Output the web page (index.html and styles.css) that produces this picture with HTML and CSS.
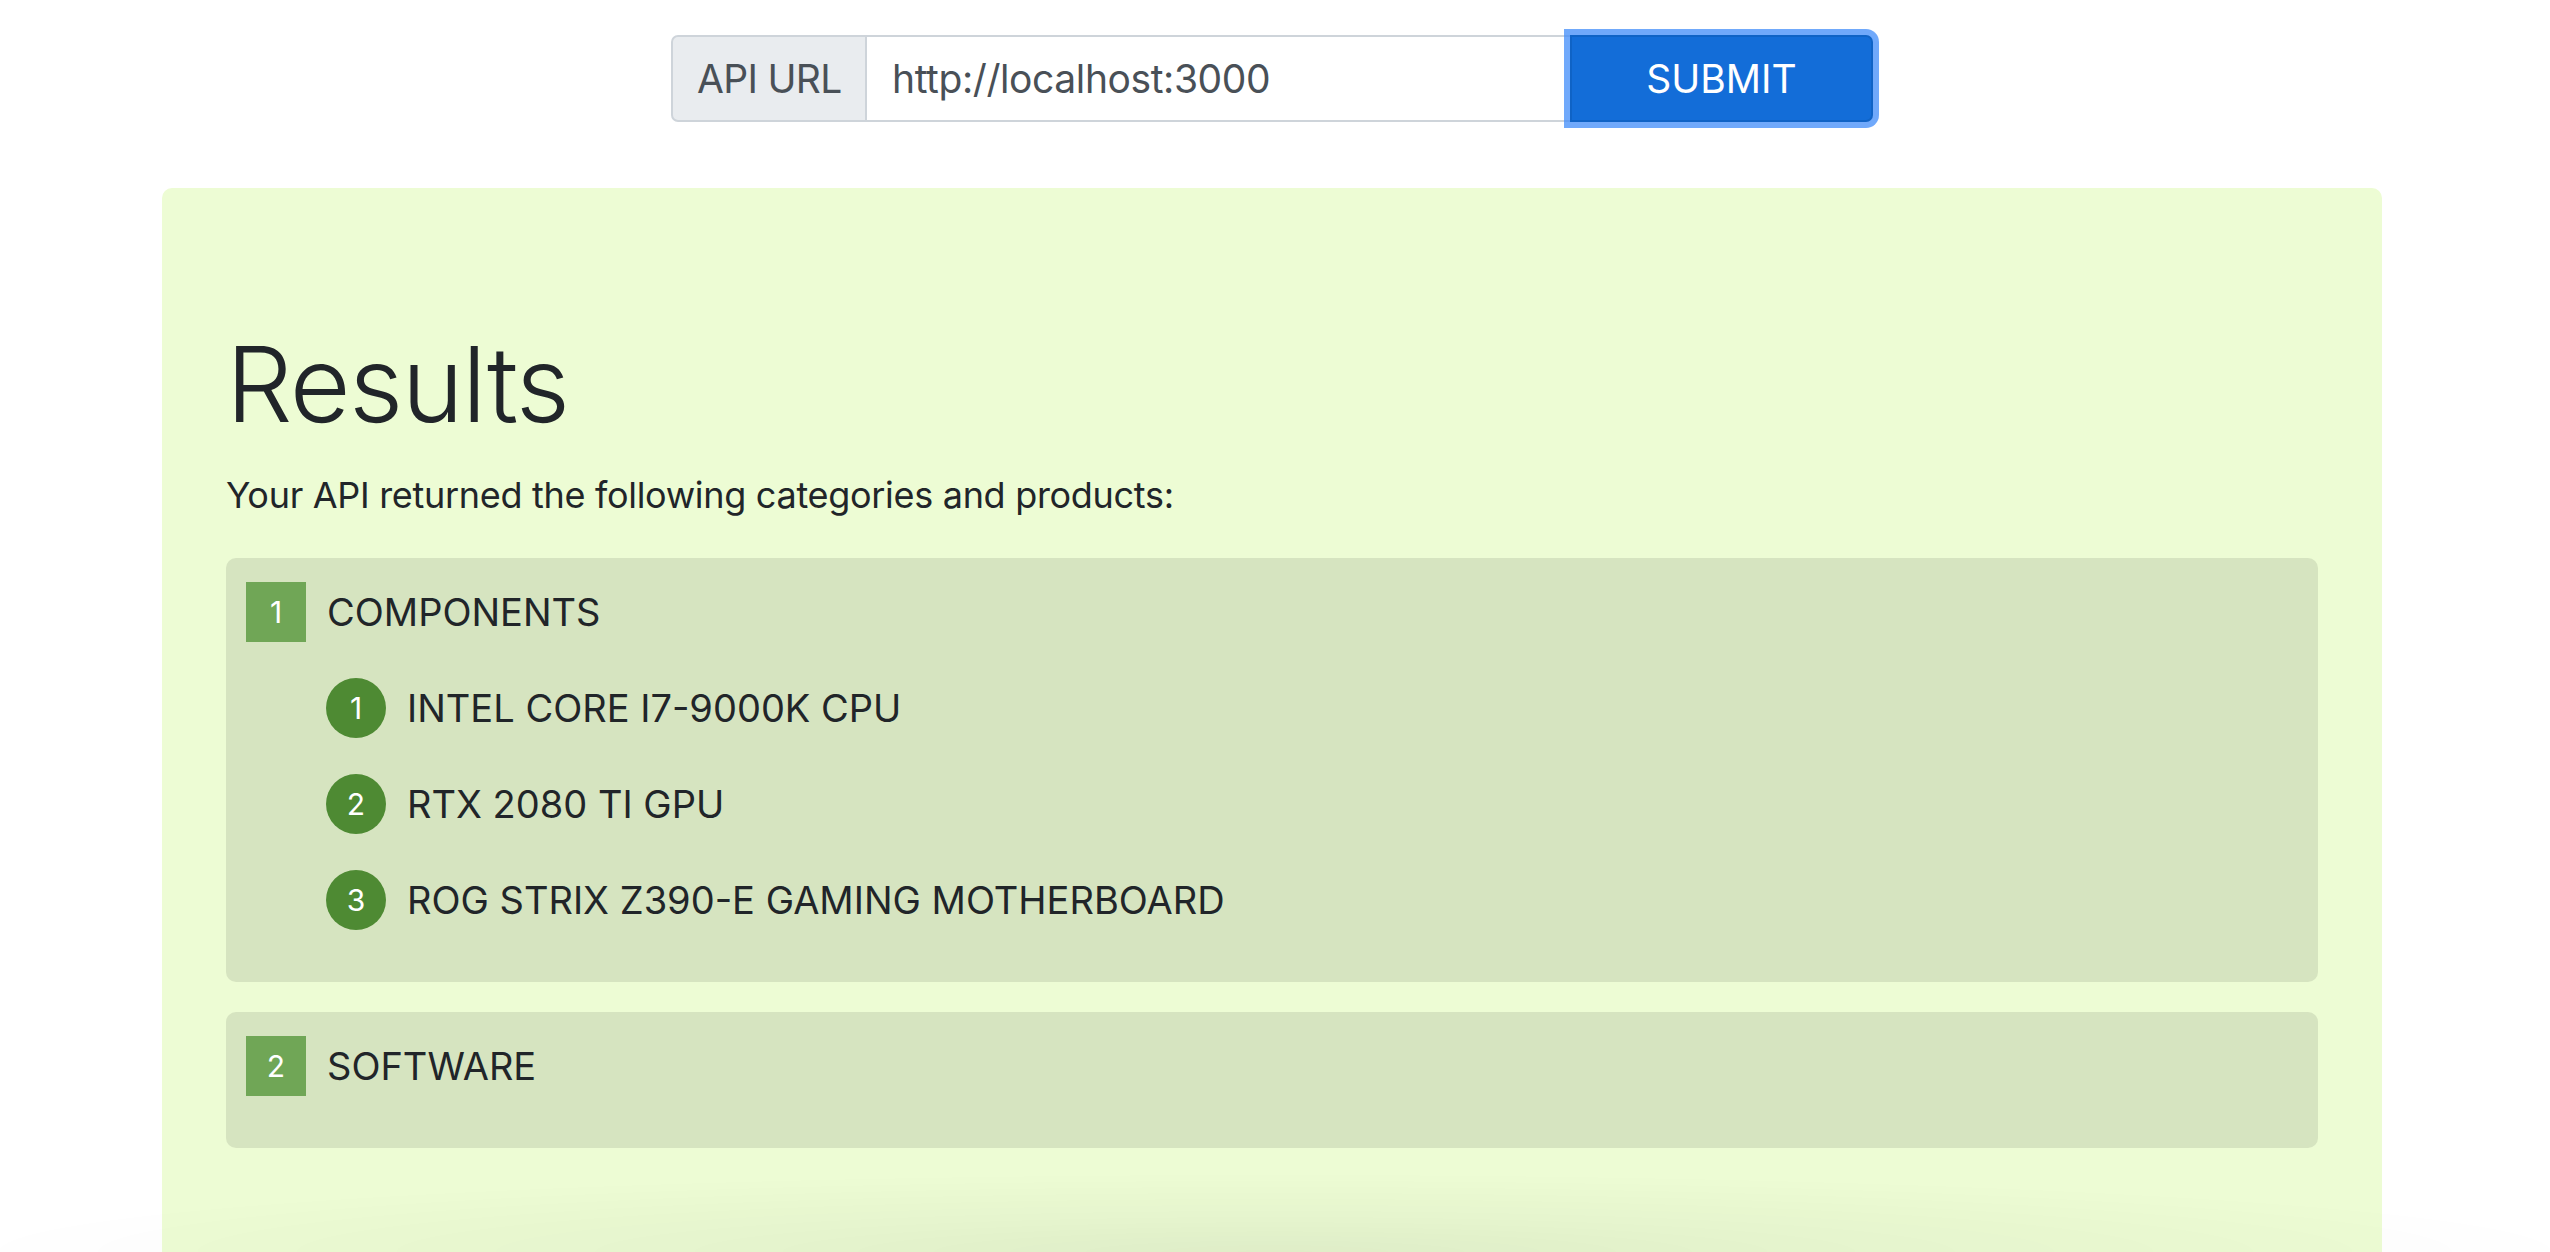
FILE: index.html
```html
<!DOCTYPE html>
<html lang="en">
<head>
<meta charset="utf-8">
<title>Results</title>
<link rel="stylesheet" href="styles.css">
</head>
<body>
<div class="page">
  <form class="api-form">
    <div class="input-group">
      <span class="input-label">API URL</span>
      <input class="input-field" type="text" value="http://localhost:3000">
      <button class="submit-btn" type="button">SUBMIT</button>
    </div>
  </form>

  <section class="results-card">
    <h1 class="results-title">Results</h1>
    <p class="results-lead">Your API returned the following categories and products:</p>

    <div class="category">
      <div class="category-head">
        <span class="category-badge">1</span>
        <span class="category-name">COMPONENTS</span>
      </div>
      <ul class="product-list">
        <li class="product"><span class="product-badge">1</span><span class="product-name">INTEL CORE I7-9000K CPU</span></li>
        <li class="product"><span class="product-badge">2</span><span class="product-name">RTX 2080 TI GPU</span></li>
        <li class="product"><span class="product-badge">3</span><span class="product-name">ROG STRIX Z390-E GAMING MOTHERBOARD</span></li>
      </ul>
    </div>

    <div class="category">
      <div class="category-head">
        <span class="category-badge">2</span>
        <span class="category-name">SOFTWARE</span>
      </div>
    </div>
  </section>
</div>
<div class="bottom-shade"></div>
</body>
</html>
```

FILE: styles.css
```css
html, body {
  margin: 0;
  padding: 0;
  background: #ffffff;
  height: 100%;
  overflow: hidden;
}

body {
  font-family: Inter, "Noto Sans", "Liberation Sans", sans-serif;
  color: #212529;
}

.page {
  display: flex;
  flex-direction: column;
  align-items: center;
  padding: 35px 6px 0 0;
}

.api-form {
  display: flex;
  justify-content: center;
  margin: 0 0 66px 0;
}

.input-group {
  display: flex;
  align-items: stretch;
  height: 87px;
}

.input-label {
  display: flex;
  align-items: center;
  box-sizing: border-box;
  width: 196px;
  padding-left: 24px;
  background: #e9ecef;
  border: 2px solid #ced4da;
  border-radius: 7px 0 0 7px;
  color: #495057;
  font-size: 39px;
  letter-spacing: -0.7px;
}

.input-field {
  box-sizing: border-box;
  width: 703px;
  height: 87px;
  margin: 0;
  padding: 0 0 0 25px;
  border: 2px solid #ced4da;
  border-left: none;
  border-right: none;
  background: #fff;
  color: #495057;
  font-family: Inter, "Noto Sans", "Liberation Sans", sans-serif;
  font-size: 39px;
  letter-spacing: -0.4px;
  outline: none;
}

.submit-btn {
  box-sizing: border-box;
  width: 303px;
  height: 87px;
  margin: 0;
  border: 2px solid #0f63c6;
  border-radius: 0 7px 7px 0;
  background: #136dd8;
  color: #ffffff;
  font-family: Inter, "Noto Sans", "Liberation Sans", sans-serif;
  font-size: 39px;
  letter-spacing: 0;
  box-shadow: 0 0 0 6px rgba(64, 140, 250, 0.75);
}

.results-card {
  box-sizing: border-box;
  width: 2220px;
  min-height: 1100px;
  padding: 133px 64px 80px 64px;
  background: #edfcd4;
  border-radius: 10px;
}

.results-title {
  margin: 0;
  font-size: 105px;
  font-weight: 300;
  line-height: 1.2;
  letter-spacing: -1.5px;
}

.results-lead {
  margin: 21px 0 36px 0;
  font-size: 36px;
  line-height: 1.5;
  letter-spacing: -0.3px;
}

.category {
  box-sizing: border-box;
  padding: 24px 20px 52px 20px;
  margin-bottom: 30px;
  background: #d6e4c0;
  border-radius: 10px;
}

.category-head {
  display: flex;
  align-items: center;
  gap: 21px;
}

.category-badge {
  display: flex;
  align-items: center;
  justify-content: center;
  width: 60px;
  height: 60px;
  background: #70a656;
  color: #ffffff;
  font-size: 30px;
}

.category-name {
  font-size: 38px;
  letter-spacing: 0;
}

.product-list {
  list-style: none;
  margin: 36px 0 0 0;
  padding: 0 0 0 80px;
  display: flex;
  flex-direction: column;
  gap: 36px;
}

.product {
  display: flex;
  align-items: center;
  gap: 21px;
}

.product-badge {
  display: flex;
  align-items: center;
  justify-content: center;
  width: 60px;
  height: 60px;
  border-radius: 50%;
  background: #4e8a33;
  color: #ffffff;
  font-size: 30px;
}

.product-name {
  font-size: 38px;
  letter-spacing: 0;
}

.bottom-shade {
  position: fixed;
  left: 0;
  right: 0;
  bottom: 0;
  height: 80px;
  pointer-events: none;
  background: radial-gradient(ellipse 52% 100% at 50% 100%, rgba(0, 0, 0, 0.06) 0%, rgba(0, 0, 0, 0.03) 40%, rgba(0, 0, 0, 0) 100%);
}
```
